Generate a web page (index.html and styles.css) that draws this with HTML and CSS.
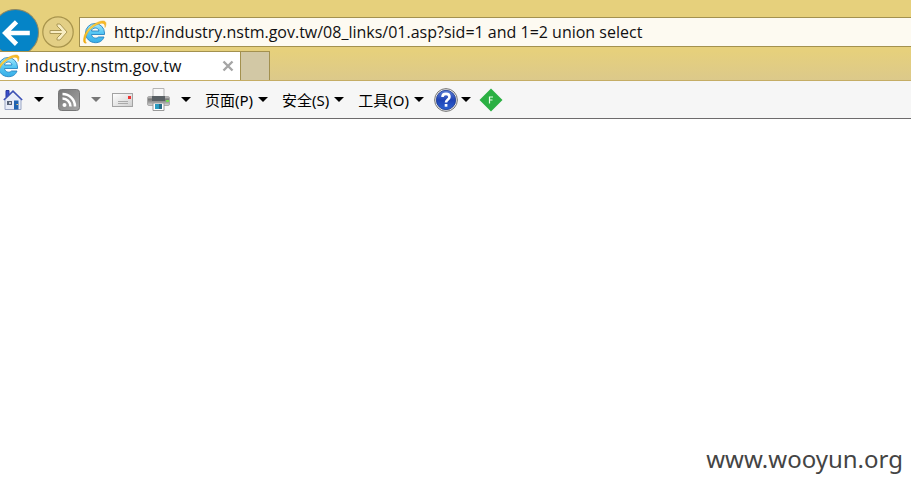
FILE: index.html
```html
<!DOCTYPE html>
<html lang="zh-CN">
<head>
<meta charset="utf-8">
<title>industry.nstm.gov.tw</title>
<link rel="stylesheet" href="styles.css">
</head>
<body>
<svg class="defs" aria-hidden="true">
  <defs>
    <linearGradient id="blue" x1="0" y1="0" x2="0" y2="1"><stop offset="0" stop-color="#a5e8fc"/><stop offset=".5" stop-color="#55c6f3"/><stop offset="1" stop-color="#37aee8"/></linearGradient>
    <linearGradient id="gold" x1="0" y1="1" x2="1" y2="0"><stop offset="0" stop-color="#f2a900"/><stop offset=".5" stop-color="#ffd84a"/><stop offset="1" stop-color="#f6b21b"/></linearGradient>
    <linearGradient id="grey" x1="0" y1="0" x2="1" y2="1"><stop offset="0" stop-color="#777"/><stop offset="1" stop-color="#a6a6a6"/></linearGradient>
    <linearGradient id="paper" x1="0" y1="0" x2="1" y2="1"><stop offset="0" stop-color="#fff"/><stop offset="1" stop-color="#cfcfcf"/></linearGradient>
    <linearGradient id="metal" x1="0" y1="0" x2="0" y2="1"><stop offset="0" stop-color="#d4d4d4"/><stop offset=".3" stop-color="#777"/><stop offset=".6" stop-color="#999"/><stop offset="1" stop-color="#d8d8d8"/></linearGradient>
    <linearGradient id="navy" x1="0" y1="0" x2="0" y2="1"><stop offset="0" stop-color="#5c7fd8"/><stop offset=".5" stop-color="#1f43b4"/><stop offset="1" stop-color="#2c62d2"/></linearGradient>
    <symbol id="ie" viewBox="0 0 24 24">
      <path d="M2.500 13A9.500 9.500 0 1 1 21.500 13V14.500H8.500C9 18.500 14 19 15.500 17H21C19.500 21 16.500 22.700 12.500 22.700C7 22.700 2.500 18.500 2.500 13ZM8.500 11H16C15.500 7 9 7 8.500 11Z" fill="url(#blue)" stroke="#2683c2" stroke-width=".9"/>
      <path d="M3.500 23C0 24 0 20 1.500 15C4.500 7.500 14 1 20 1C23.500 1 23.500 4 22 7.500C22.200 4 20.500 3 18 3.300C11.500 4.500 5 10.500 2.800 17C2 20.500 2 22 3.500 23Z" fill="url(#gold)" stroke="#e5a51d" stroke-width=".5"/>
    </symbol>
  </defs>
</svg>

<header class="chrome">
  <div class="nav">
    <button class="back" aria-label="Back"><svg viewBox="0 0 46 46"><circle cx="23" cy="23" r="22.500" fill="#0584c7" stroke="#8b8763"/><path d="M37 23.500H14M24 12.500L13 23.500L24 34.500" fill="none" stroke="#fff" stroke-width="4.500"/></svg></button>
    <button class="forward" aria-label="Forward"><svg viewBox="0 0 32 32"><circle cx="16" cy="16" r="15.200" fill="#e3cf85" stroke="#a8944c" stroke-width="1.200"/><path d="M8 14.500H19.500L15 10V8H18L25 16L18 24H15V22L19.500 17.500H8Z" fill="#f8edc2" stroke="#aa9856"/></svg></button>
    <div class="address">
      <svg class="site-icon" aria-hidden="true"><use href="#ie"/></svg>
      <input class="url" type="text" aria-label="Address" value="http://industry.nstm.gov.tw/08_links/01.asp?sid=1 and 1=2 union select">
    </div>
  </div>
  <div class="tabs">
    <div class="tab">
      <svg class="tab-icon" aria-hidden="true"><use href="#ie"/></svg>
      <span class="tab-title">industry.nstm.gov.tw</span>
      <button class="close" aria-label="Close tab"><svg viewBox="0 0 12 12"><path d="M1.500 1.500L10.500 10.500M10.500 1.500L1.500 10.500" stroke="#a5a5a5" stroke-width="2.400"/></svg></button>
    </div>
    <button class="new-tab" aria-label="New tab"></button>
  </div>
</header>

<nav class="toolbar">
  <button class="tool wide" aria-label="Home"><svg class="home" viewBox="0 0 20 22"><path d="M3 1.500H6V8H3Z" fill="#3a4fd0" stroke="#2a3a9c"/><path d="M2 10.500L10 3L18 10.500V20.500H2Z" fill="#e8ecf8" stroke="#9aa6c4"/><path d="M.8 11L10 2L19.200 11" fill="none" stroke="#3c50b8" stroke-width="1.500"/><rect x="4" y="12" width="5" height="4" fill="#596478"/><rect x="6" y="13" width="2" height="2" fill="#c5cad4"/><rect x="11" y="11.500" width="4.500" height="9" fill="#1f62b0"/><path d="M13.500 15.500H15" stroke="#ffd16a"/></svg><i class="caret"></i></button>
  <button class="tool wide" aria-label="Feeds"><svg class="rss" viewBox="0 0 22 22"><rect x=".5" y=".5" width="21" height="21" rx="3" fill="url(#grey)" stroke="#777"/><circle cx="6.500" cy="16" r="2" fill="#fff"/><path d="M4.500 9.500A8 8 0 0 1 12.500 17.500M4.500 5A12.500 12.500 0 0 1 17 17.500" fill="none" stroke="#fff" stroke-width="2.500"/></svg><i class="caret dim"></i></button>
  <button class="tool mail-tool" aria-label="Read mail"><svg class="mail" viewBox="0 0 21 14"><rect x=".5" y=".5" width="20" height="13" fill="url(#paper)" stroke="#a3a3a3"/><rect x="16" y="3" width="3" height="3" fill="#e33"/><path d="M6 8.500H16M6 10.500H16" stroke="#aaa"/></svg></button>
  <button class="tool wide" aria-label="Print"><svg class="printer" viewBox="0 0 23 23"><path d="M6 .5H17V9H6Z" fill="#f8f8f8" stroke="#b5b5b5"/><rect x=".5" y="8.500" width="22" height="9" rx="1.500" fill="url(#metal)" stroke="#aaa"/><rect x="5" y="8" width="13" height="5" fill="#596064"/><path d="M19 13H22" stroke="#76dd52" stroke-width="2"/><path d="M6 15H17V22.500H6Z" fill="#fff" stroke="#999"/><path d="M8 16H12V21H8Z" fill="#2b9bc0"/><path d="M12 16H15V21H12Z" fill="#266b86"/></svg><i class="caret"></i></button>
  <button class="tool">页面(P)<i class="caret"></i></button>
  <button class="tool">安全(S)<i class="caret"></i></button>
  <button class="tool">工具(O)<i class="caret"></i></button>
  <button class="tool help-tool" aria-label="Help"><svg class="help" viewBox="0 0 24 24"><circle cx="12" cy="12" r="11.400" fill="#e6e6e6" stroke="#777"/><circle cx="12" cy="12" r="9.700" fill="url(#navy)" stroke="#18358c" stroke-width=".8"/><path d="M8.500 9C8.500 4.800 15.500 4.800 15.500 9C15.500 11.500 12 11.500 12 14.500" fill="none" stroke="#fff" stroke-width="2.600"/><rect x="10.700" y="16" width="2.700" height="2.700" fill="#fff"/></svg><i class="caret"></i></button>
  <button class="tool addon-tool" aria-label="F"><svg class="addon" viewBox="0 0 24 24"><path d="M12 .5L23.500 12L12 23.500L.5 12Z" fill="#2bb043"/><path d="M10.500 15.500V9H14M10.500 12H13.500" fill="none" stroke="#e8ffe8" stroke-width="1.200"/></svg></button>
</nav>

<main class="page"><p class="mark">www.wooyun.org</p></main>
</body>
</html>
```

FILE: styles.css
```css
* { box-sizing: border-box; }
html, body { height: 100%; }
body {
  margin: 0;
  display: flex;
  flex-direction: column;
  background: #fff;
  color: #111;
  font-family: "Open Sans", "Noto Sans CJK SC", sans-serif;
  font-size: 16px;
  overflow: hidden;
}
button { margin: 0; padding: 0; border: 0; background: none; color: inherit; font: inherit; }
svg { display: block; flex: none; }
.defs { position: absolute; width: 0; height: 0; }

.chrome { background: #e6d07c; }
.nav {
  display: flex;
  align-items: center;
  height: 51px;
  padding-top: 13px;
  overflow: hidden;
}
.back { flex: none; margin-left: -8px; }
.back svg { width: 47px; height: 47px; }
.forward { flex: none; margin: 0 5px 0 3px; }
.forward svg { width: 32px; height: 32px; }
.address {
  flex: 1;
  display: flex;
  align-items: center;
  gap: 7px;
  height: 30px;
  padding-left: 3px;
  border: 1px solid #a3914f;
  border-right: 0;
  background: #fdfaf1;
}
.site-icon { width: 24px; height: 24px; }
.url {
  flex: 1;
  min-width: 0;
  padding: 0;
  border: 0;
  outline: 0;
  background: none;
  color: #111;
  font: inherit;
}

.tabs {
  display: flex;
  height: 30px;
  border-bottom: 1px solid #c5ad65;
  background: linear-gradient(#e6d07c, #dcc98a);
}
.tab {
  display: flex;
  align-items: center;
  width: 241px;
  padding-right: 6px;
  border: 1px solid #a3914f;
  border-width: 1px 1px 0 0;
  background: #fff;
}
.tab-icon { width: 24px; height: 24px; margin: 0 5px 0 -4px; }
.tab-title { flex: 1; }
.close svg { width: 12px; height: 12px; }
.new-tab {
  width: 29px;
  border: 1px solid #a3914f;
  border-width: 1px 1px 0 0;
  background: #d2c8a5;
}

.toolbar {
  display: flex;
  align-items: center;
  gap: 14px;
  height: 38px;
  padding-left: 3px;
  border-bottom: 1px solid #6d6b6c;
  background: #f6f6f6;
  color: #000;
  font-family: "Noto Sans", "Noto Sans CJK SC", sans-serif;
  font-size: 15px;
}
.tool { display: flex; align-items: center; gap: 5px; white-space: nowrap; }
.wide { gap: 11px; }
.mail-tool { margin-left: -3px; }
.help-tool { gap: 3px; margin-left: -4px; }
.addon-tool { margin-left: -6px; }
.caret {
  border: 5px solid transparent;
  border-top-color: #000;
  border-bottom: 0;
}
.dim { border-top-color: #777; }
.home { width: 20px; height: 22px; }
.rss { width: 22px; height: 22px; }
.mail { width: 21px; height: 14px; }
.printer { width: 23px; height: 23px; }
.help, .addon { width: 24px; height: 24px; }

.page {
  flex: 1;
  display: flex;
  align-items: flex-end;
  justify-content: flex-end;
  padding: 13px 8px;
}
.mark { margin: 0; color: #444; font-family: "Noto Sans", sans-serif; font-size: 24px; line-height: 34px; }
```
